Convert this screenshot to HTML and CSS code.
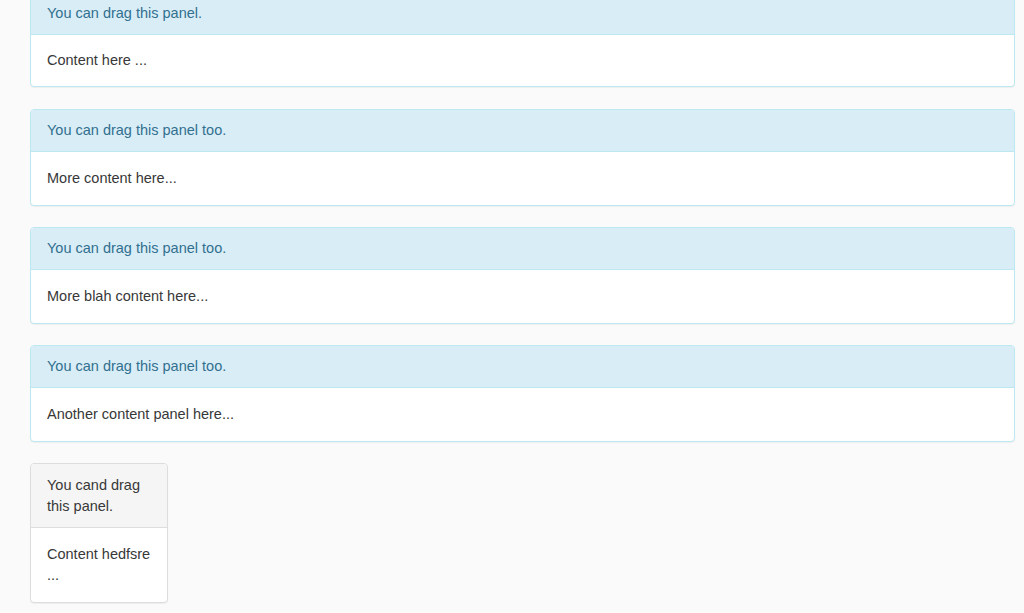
FILE: index.html
```html
<!DOCTYPE html>
<html lang="en">
<head>
<meta charset="utf-8">
<title>Draggable panels</title>
<link rel="stylesheet" href="styles.css">
</head>
<body>
<div class="page">
  <div class="panel panel-info panel-first">
    <div class="panel-heading">You can drag this panel.</div>
    <div class="panel-body">Content here ...</div>
  </div>
  <div class="panel panel-info">
    <div class="panel-heading">You can drag this panel too.</div>
    <div class="panel-body">More content here...</div>
  </div>
  <div class="panel panel-info">
    <div class="panel-heading">You can drag this panel too.</div>
    <div class="panel-body">More blah content here...</div>
  </div>
  <div class="panel panel-info">
    <div class="panel-heading">You can drag this panel too.</div>
    <div class="panel-body">Another content panel here...</div>
  </div>
  <div class="panel panel-default panel-small">
    <div class="panel-heading">You cand drag this panel.</div>
    <div class="panel-body">Content hedfsre ...</div>
  </div>
</div>
</body>
</html>
```
FILE: styles.css
```css
html, body {
  margin: 0;
  padding: 0;
  background: #fafafa;
  overflow: hidden;
}
body {
  font-family: "Liberation Sans", Arial, sans-serif;
  font-size: 14.5px;
  line-height: 21px;
  color: #383838;
}
.page {
  display: flex;
  flex-direction: column;
  align-items: stretch;
  padding: 0 9px 0 30px;
  margin-top: -8px;
}
.panel {
  background: #fff;
  border: 1px solid transparent;
  border-radius: 4px;
  box-shadow: 0 1px 1px rgba(0, 0, 0, 0.05);
  margin-bottom: 21px;
}
.panel-heading {
  padding: 10px 16px;
  border-bottom: 1px solid transparent;
  border-radius: 3px 3px 0 0;
}
.panel-body {
  padding: 16px;
}
.panel-first {
  margin-bottom: 22px;
}
.panel-first .panel-body {
  padding: 15px 16px;
}
.panel-info {
  border-color: #bce8f1;
}
.panel-info .panel-heading {
  background: #d9edf7;
  color: #31708f;
  border-bottom-color: #bce8f1;
}
.panel-default {
  border-color: #ddd;
}
.panel-default .panel-heading {
  background: #f5f5f5;
  color: #383838;
  border-bottom-color: #ddd;
}
.panel-small {
  align-self: flex-start;
  width: 136px;
}
.panel-small .panel-heading {
  padding: 11px 16px 10px;
}
.panel-small .panel-body {
  padding: 16px;
}
```
